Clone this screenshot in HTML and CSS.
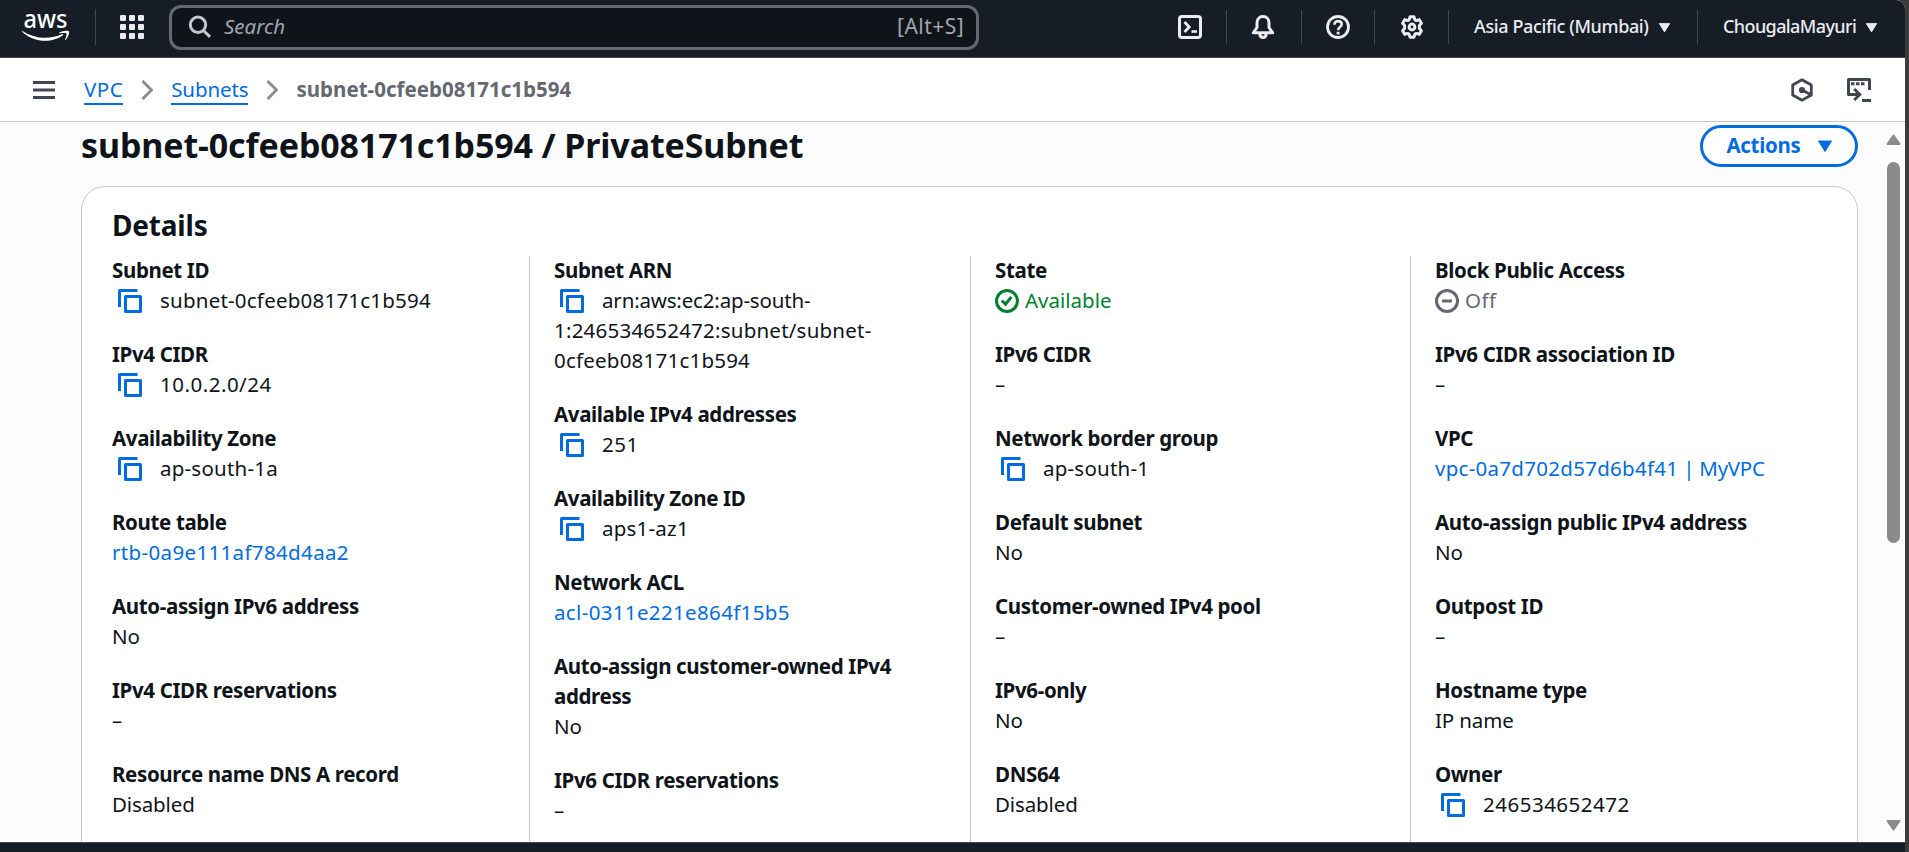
FILE: index.html
```html
<!DOCTYPE html>
<html lang="en">
<head>
<meta charset="utf-8">
<title>Subnet details | VPC Console</title>
<link rel="stylesheet" href="styles.css">
</head>
<body>
<svg class="defs" width="0" height="0">
  <symbol id="copy" viewBox="0 0 16 16"><path d="M15 5H5v10h10V5Z M13 1H1v11" fill="none" stroke="currentColor" stroke-width="2" stroke-linejoin="round"/></symbol>
  <symbol id="caret" viewBox="0 0 16 16"><path d="M1.5 3h13L8 13.5Z" fill="currentColor" stroke="currentColor" stroke-width="1" stroke-linejoin="round"/></symbol>
  <symbol id="chev" viewBox="0 0 12 20"><path d="M1.5 1l9 9-9 9" fill="none" stroke="currentColor" stroke-width="3"/></symbol>
</svg>
<div class="window">
  <header class="topnav">
    <div class="cell cell-logo">
      <svg class="logo" width="48" height="44" viewBox="0 -12 48 44">
        <text x="1.5" y="16.500" class="logo-text" textLength="44" lengthAdjust="spacingAndGlyphs">aws</text>
        <path d="M.4 20c7 4.600 14.500 6.800 22.500 6.800 6 0 12-1.400 17-3.600 1-.4 1.700.5.9 1.200C36.500 27.500 29.500 29.800 23.500 29.800 14.500 29.800 6.500 26.500.3 20.900c-.5-.5-.2-1.100.1-.9Z" fill="#fff"/>
        <path d="M37.200 21.600c2.600-1.700 8.500-2.600 9.600-1.300.9 1.200-.5 6.200-3 8.400-.4.400-1 .1-.7-.5.9-1.900 1.900-4.900 1.300-5.800-.6-.8-4.500-.5-6.700-.2-.7.100-.9-.3-.5-.6Z" fill="#fff"/>
      </svg>
    </div>
    <div class="cell cell-apps">
      <svg width="24" height="24" viewBox="0 0 24 24" fill="#ebebf0"><rect width="6" height="6" rx="1"/><rect x="9" width="6" height="6" rx="1"/><rect x="18" width="6" height="6" rx="1"/><rect y="9" width="6" height="6" rx="1"/><rect x="9" y="9" width="6" height="6" rx="1"/><rect x="18" y="9" width="6" height="6" rx="1"/><rect y="18" width="6" height="6" rx="1"/><rect x="9" y="18" width="6" height="6" rx="1"/><rect x="18" y="18" width="6" height="6" rx="1"/></svg>
    </div>
    <div class="search">
      <svg width="24" height="24" viewBox="0 0 24 24" fill="none" stroke="#c6c6cd" stroke-width="3"><circle cx="10" cy="9.800" r="7.700"/><path d="M15.500 15.500l6.500 6.300"/></svg>
      <span class="search-hint">Search</span><span class="search-key">[Alt+S]</span>
    </div>
    <div class="cell cell-shell">
      <svg width="24" height="24" viewBox="0 0 24 24" fill="none" stroke="#ebebf0" stroke-width="3"><rect x="1.500" y="1.500" width="21" height="21" rx="2.500"/><path d="M6.500 7l4.700 5-4.700 5" stroke-width="2.800"/><path d="M13.500 16.500h5.500" stroke-width="2.600"/></svg>
    </div>
    <div class="cell cell-bell">
      <svg width="24" height="24" viewBox="0 0 24 24" fill="none" stroke="#ebebf0" stroke-width="3" stroke-linejoin="round"><path d="M12 1.500c-4 0-6 3-6 6.500v4.500L2.300 17.800h19.400L18 12.500V8c0-3.500-2-6.500-6-6.500Z"/><path d="M8.800 18.500c0 5.300 6.400 5.300 6.400 0"/></svg>
    </div>
    <div class="cell cell-help">
      <svg width="24" height="24" viewBox="0 0 24 24" fill="none" stroke="#ebebf0" stroke-width="2.800"><circle cx="12" cy="12" r="10.500"/><path d="M8.400 9.800c0-2.500 1.600-3.700 3.700-3.700s3.600 1.300 3.600 3.200c0 2.900-3.600 2.600-3.600 5.900" stroke-width="2.600"/><path d="M12.100 16.700v2.800"/></svg>
    </div>
    <div class="cell cell-gear">
      <svg width="24" height="24" viewBox="0 0 24 24" fill="none" stroke="#ebebf0" stroke-width="3" stroke-linejoin="round"><path d="M10 1.800h4l.8 2.900 1.500.9 2.900-1 2.200 3.600-2 2.200v3.200l2 2.200-2.200 3.600-2.900-1-1.500.9-.8 2.900h-4l-.8-2.900-1.500-.9-2.900 1-2.200-3.600 2-2.200v-3.200l-2-2.200 2.200-3.600 2.900 1 1.500-.9Z"/><circle cx="12" cy="12" r="2.900"/></svg>
    </div>
    <div class="cell cell-region"><span class="region">Asia Pacific (Mumbai)</span><svg width="13" height="13"><use href="#caret"/></svg></div>
    <div class="cell cell-user"><span class="user">ChougalaMayuri</span><svg width="13" height="13"><use href="#caret"/></svg></div>
  </header>

  <nav class="crumbs">
    <svg class="menu" width="22" height="18" viewBox="0 0 22 18" fill="#424650"><path d="M0 0h22v3H0zM0 7.500h22v3H0zM0 15h22v3H0z"/></svg>
    <a class="crumb crumb-vpc">VPC</a>
    <svg class="chev" width="12" height="20"><use href="#chev"/></svg>
    <a class="crumb crumb-subnets">Subnets</a>
    <svg class="chev" width="12" height="20"><use href="#chev"/></svg>
    <span class="current">subnet-0cfeeb08171c1b594</span>
    <div class="tools">
      <svg width="22" height="24" viewBox="0 0 22 24" fill="none" stroke="#424650" stroke-width="2.800"><path d="M11 1.800l9.300 5.100v10.200L11 22.200l-9.300-5.100V6.900Z" stroke-linejoin="round"/><circle cx="11" cy="12" r="3.100" fill="#424650" stroke="none"/><path d="M11 12l9 4.800"/></svg>
      <svg width="24" height="24" viewBox="0 0 24 24" fill="none" stroke="#424650" stroke-width="3"><path d="M22.500 12V1.500h-21v15H13" stroke-linejoin="round"/><path d="M4 5.800h3.500M9 5.800h3.500M14 5.800h3.500" stroke-width="3"/><path d="M7.200 11l5.600 5.500L7.200 22" stroke-width="3"/><path d="M15 22.500h9"/></svg>
    </div>
  </nav>

  <div class="body">
    <main class="page">
      <div class="heading">
        <h1>subnet-0cfeeb08171c1b594 / PrivateSubnet</h1>
        <button class="actions"><span>Actions</span><svg width="16" height="16"><use href="#caret"/></svg></button>
      </div>
      <section class="card">
        <h2>Details</h2>
        <div class="columns">
          <dl class="col">
            <div><dt>Subnet ID</dt><dd class="id"><svg class="copy"><use href="#copy"/></svg>subnet-0cfeeb08171c1b594</dd></div>
            <div><dt>IPv4 CIDR</dt><dd class="cidr"><svg class="copy"><use href="#copy"/></svg>10.0.2.0/24</dd></div>
            <div><dt>Availability Zone</dt><dd class="id"><svg class="copy"><use href="#copy"/></svg>ap-south-1a</dd></div>
            <div><dt>Route table</dt><dd class="id wide"><a>rtb-0a9e111af784d4aa2</a></dd></div>
            <div><dt>Auto-assign IPv6 address</dt><dd>No</dd></div>
            <div><dt>IPv4 CIDR reservations</dt><dd>–</dd></div>
            <div><dt>Resource name DNS A record</dt><dd>Disabled</dd></div>
          </dl>
          <dl class="col">
            <div><dt>Subnet ARN</dt><dd class="id"><svg class="copy"><use href="#copy"/></svg><span class="tight">arn:aws:ec2:ap-south-</span><br>1:246534652472:subnet/subnet-<br>0cfeeb08171c1b594</dd></div>
            <div><dt>Available IPv4 addresses</dt><dd class="cidr"><svg class="copy"><use href="#copy"/></svg>251</dd></div>
            <div><dt>Availability Zone ID</dt><dd class="id"><svg class="copy"><use href="#copy"/></svg>aps1-az1</dd></div>
            <div><dt>Network ACL</dt><dd class="id wide"><a>acl-0311e221e864f15b5</a></dd></div>
            <div><dt>Auto-assign customer-owned IPv4<br>address</dt><dd>No</dd></div>
            <div><dt>IPv6 CIDR reservations</dt><dd>–</dd></div>
          </dl>
          <dl class="col">
            <div><dt>State</dt><dd class="ok"><svg class="status" viewBox="0 0 24 24" fill="none" stroke="currentColor" stroke-width="3"><circle cx="12" cy="12" r="10.500"/><path d="M6.800 11.500l3.700 3.700 5.800-7.200"/></svg>Available</dd></div>
            <div><dt>IPv6 CIDR</dt><dd>–</dd></div>
            <div><dt>Network border group</dt><dd class="id"><svg class="copy"><use href="#copy"/></svg>ap-south-1</dd></div>
            <div><dt>Default subnet</dt><dd>No</dd></div>
            <div><dt>Customer-owned IPv4 pool</dt><dd>–</dd></div>
            <div><dt>IPv6-only</dt><dd>No</dd></div>
            <div><dt>DNS64</dt><dd>Disabled</dd></div>
          </dl>
          <dl class="col">
            <div><dt>Block Public Access</dt><dd class="off"><svg class="status" viewBox="0 0 24 24" fill="none" stroke="currentColor" stroke-width="3"><circle cx="12" cy="12" r="10.500"/><path d="M7 12h10"/></svg>Off</dd></div>
            <div><dt>IPv6 CIDR association ID</dt><dd>–</dd></div>
            <div><dt>VPC</dt><dd class="vpc"><a><span class="vpc-id">vpc-0a7d702d57d6b4f41</span> | MyVPC</a></dd></div>
            <div><dt>Auto-assign public IPv4 address</dt><dd>No</dd></div>
            <div><dt>Outpost ID</dt><dd>–</dd></div>
            <div><dt>Hostname type</dt><dd>IP name</dd></div>
            <div><dt>Owner</dt><dd class="cidr"><svg class="copy"><use href="#copy"/></svg>246534652472</dd></div>
          </dl>
        </div>
      </section>
    </main>
    <aside class="scrollbar">
      <svg width="15" height="12" viewBox="0 0 15 12"><path d="M7.500 1.500L13.500 10h-12Z" fill="#8b8b8b" stroke="#8b8b8b" stroke-width="2" stroke-linejoin="round"/></svg>
      <div class="thumb"></div>
      <svg class="down" width="15" height="12" viewBox="0 0 15 12"><path d="M7.500 10.500L13.500 2h-12Z" fill="#8b8b8b" stroke="#8b8b8b" stroke-width="2" stroke-linejoin="round"/></svg>
    </aside>
  </div>
  <footer class="footer"></footer>
</div>
</body>
</html>
```
FILE: styles.css
```css
* { box-sizing: border-box; }
body { margin: 0; height: 852px; overflow: hidden; background: #3a3b3d; font-family: "Noto Sans", "Open Sans", sans-serif; font-size: 20.5px; line-height: 30px; color: #0f141a; }
svg { display: block; flex: none; }
.defs { position: absolute; }
.window { width: 1905px; height: 852px; display: flex; flex-direction: column; background: #fcfcfd; border-top-right-radius: 9px; overflow: hidden; }

.topnav { height: 58px; flex: none; display: flex; align-items: center; background: #161d26; border-bottom: 1px solid #424650; padding-bottom: 3px; color: #ebebf0; }
.cell { height: 34px; display: flex; align-items: center; flex: none; font-size: 18px; font-weight: 500; white-space: nowrap; border-right: 1px solid #424650; }
.cell-logo { width: 96px; height: 36px; padding-left: 22px; }
.logo { margin-top: -17px; margin-bottom: -5px; overflow: visible; }
.logo-text { font: 500 25px "Noto Sans", sans-serif; fill: #fff; }
.cell-apps { width: 73px; padding-left: 24px; border: 0; }
.search { width: 810px; height: 45px; flex: none; display: flex; align-items: center; padding: 0 12px 0 16px; border: 3px solid #656871; border-radius: 12px; background: #0f141a; color: #a4a4ad; font-size: 20.5px; }
.search-hint { font-style: italic; margin: 0 0 2px 12px; }
.search-key { margin: 0 0 2px auto; font-size: 21px; letter-spacing: .45px; }
.cell-shell { width: 248px; padding-left: 199px; }
.cell-bell { width: 75px; padding-left: 24px; }
.cell-help { width: 73px; padding-left: 24px; }
.cell-gear { width: 74px; padding-left: 25px; }
.cell-region { width: 249px; padding-left: 25px; gap: 9px; }
.cell-user { padding-left: 25px; gap: 8px; border: 0; }
.region, .user { margin-bottom: 2px; }
.region { width: 175px; letter-spacing: -.38px; }
.user { width: 134px; letter-spacing: -.6px; }

.crumbs { height: 64px; flex: none; display: flex; align-items: center; padding: 0 34px 0 33px; background: #fff; border-bottom: 1px solid #c6c6cd; white-space: nowrap; }
.menu { margin-right: 29px; }
.crumb { color: #006ce0; border-bottom: 2px solid #006ce0; height: 29px; line-height: 27px; margin-top: 2px; }
.crumb-vpc { letter-spacing: .5px; }
.crumb-subnets { letter-spacing: -.1px; }
.chev { color: #8c8c94; margin: 0 18px; }
.current { color: #656871; font-weight: 700; letter-spacing: .02px; margin-bottom: 2px; }
.tools { margin-left: auto; display: flex; gap: 34px; }

.body { flex: 1; min-height: 0; display: flex; overflow: hidden; }
.page { width: 1858px; flex: none; padding: 3px 0 0 81px; }
.heading { height: 42px; display: flex; align-items: center; justify-content: space-between; margin-bottom: 19px; }
h1 { margin: 0 0 2px; font-size: 34px; line-height: 40px; font-weight: 700; letter-spacing: -.13px; white-space: nowrap; }
.actions { width: 158px; height: 42px; display: flex; align-items: center; justify-content: center; gap: 16px; padding: 0 0 0 1px; border: 3px solid #006ce0; border-radius: 21px; background: #fff; color: #006ce0; font: 700 20.5px/30px "Noto Sans", sans-serif; letter-spacing: -.3px; }
.actions span { margin-bottom: 2px; }
.card { height: 900px; padding: 20px 0 0 30px; border: 1px solid #c6c6cd; border-radius: 24px; background: #fff; }
h2 { margin: 0 0 13px; font-size: 28px; line-height: 36px; font-weight: 700; letter-spacing: -.2px; }
.columns { display: flex; }
.col { width: 441px; flex: none; height: 800px; margin: 0; padding-left: 24px; border-left: 1px solid #c6c6cd; display: flex; flex-direction: column; gap: 24px; white-space: nowrap; }
.col > :first-child { margin-top: -1px; }
.col:first-child { width: 417px; padding-left: 0; border: 0; }
.col:nth-child(3) { width: 440px; }
.col:last-child { width: auto; }
dt { font-weight: 700; letter-spacing: -.36px; }
dd { margin: 0; letter-spacing: -.12px; }
.id { letter-spacing: .22px; }
.wide { letter-spacing: .35px; }
.cidr { letter-spacing: .5px; }
.tight { letter-spacing: -.17px; }
.vpc { letter-spacing: -.3px; }
.vpc-id { letter-spacing: .28px; }
a { color: #006ce0; }
.copy, .status { display: inline-block; width: 24px; height: 24px; margin-top: -3px; margin-bottom: -3px; vertical-align: -2px; }
.copy { margin-left: 6px; margin-right: 18px; color: #006ce0; }
.status { margin-right: 6px; }
.ok { color: #00802f; letter-spacing: 0; }
.off { color: #656871; letter-spacing: .5px; }

.scrollbar { flex: 1; display: flex; flex-direction: column; align-items: center; padding: 12px 0 11px 23px; }
.thumb { width: 13px; height: 381px; margin-top: 16px; border-radius: 7px; background: #8b8b8b; }
.down { margin-top: auto; }
.footer { height: 10px; flex: none; background: #161d26; border-top: 1px solid #424650; }
```
